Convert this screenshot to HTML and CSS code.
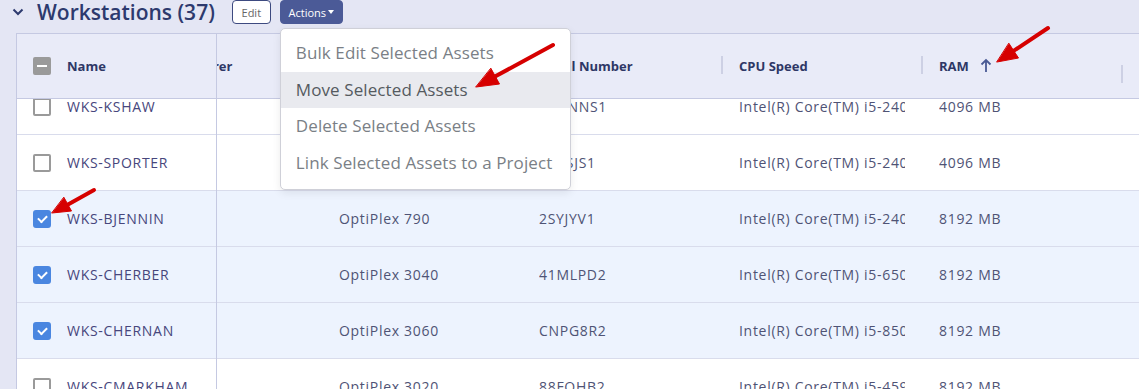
FILE: index.html
```html
<!DOCTYPE html>
<html lang="en">
<head>
  <meta charset="UTF-8">
  <title>Workstations</title>
  <link rel="stylesheet" href="styles.css">
</head>
<body>
  <div class="section-head">
    <svg class="chevron" width="12" height="8" viewBox="0 0 12 8"><path d="M1.5 1.5 L6 6 L10.5 1.5" fill="none" stroke="#2d3a6e" stroke-width="2"/></svg>
    <h2>Workstations (37)</h2>
    <button class="btn btn-outline">Edit</button>
    <div class="actions">
      <button class="btn btn-primary">Actions<span class="caret"></span></button>
      <ul class="menu">
        <li>Bulk Edit Selected Assets</li>
        <li class="hover">Move Selected Assets</li>
        <li>Delete Selected Assets</li>
        <li>Link Selected Assets to a Project</li>
      </ul>
    </div>
  </div>

  <div class="grid">
    <div class="pane-fixed">
      <div class="head-row">
        <span class="cb cb-mixed"></span>
        <span class="head-label">Name</span>
      </div>
      <div class="viewport">
        <div class="rows">
          <div class="row"><span class="cb"></span><span class="name">WKS-KSHAW</span></div>
          <div class="row"><span class="cb"></span><span class="name">WKS-SPORTER</span></div>
          <div class="row selected"><span class="cb cb-on"></span><span class="name">WKS-BJENNIN</span></div>
          <div class="row selected"><span class="cb cb-on"></span><span class="name">WKS-CHERBER</span></div>
          <div class="row selected"><span class="cb cb-on"></span><span class="name">WKS-CHERNAN</span></div>
          <div class="row"><span class="cb"></span><span class="name">WKS-CMARKHAM</span></div>
        </div>
      </div>
    </div>

    <div class="pane-scroll">
      <div class="track">
        <div class="head-row">
          <div class="cell head-label first">Manufacturer</div>
          <div class="cell head-label sep">Model</div>
          <div class="cell head-label sep">Serial Number</div>
          <div class="cell head-label sep">CPU Speed</div>
          <div class="cell head-label sep">RAM <svg class="sort" width="12" height="15" viewBox="0 0 12 15"><path d="M6 14 V2.5 M1.5 6.5 L6 2 L10.5 6.5" fill="none" stroke="#4a5a94" stroke-width="1.8"/></svg></div>
          <div class="cell head-label sep"></div>
        </div>
        <div class="viewport">
          <div class="rows">
            <div class="row"><div class="cell"></div><div class="cell"></div><div class="cell">H8ZNNS1</div><div class="cell">Intel(R) Core(TM) i5-2400 CPU</div><div class="cell">4096 MB</div><div class="cell"></div></div>
            <div class="row"><div class="cell"></div><div class="cell"></div><div class="cell">6VPSJS1</div><div class="cell">Intel(R) Core(TM) i5-2400 CPU</div><div class="cell">4096 MB</div><div class="cell"></div></div>
            <div class="row selected"><div class="cell"></div><div class="cell">OptiPlex 790</div><div class="cell">2SYJYV1</div><div class="cell">Intel(R) Core(TM) i5-2400 CPU</div><div class="cell">8192 MB</div><div class="cell"></div></div>
            <div class="row selected"><div class="cell"></div><div class="cell">OptiPlex 3040</div><div class="cell">41MLPD2</div><div class="cell">Intel(R) Core(TM) i5-6500 CPU</div><div class="cell">8192 MB</div><div class="cell"></div></div>
            <div class="row selected"><div class="cell"></div><div class="cell">OptiPlex 3060</div><div class="cell">CNPG8R2</div><div class="cell">Intel(R) Core(TM) i5-8500 CPU</div><div class="cell">8192 MB</div><div class="cell"></div></div>
            <div class="row"><div class="cell"></div><div class="cell">OptiPlex 3020</div><div class="cell">88FQHB2</div><div class="cell">Intel(R) Core(TM) i5-4590 CPU</div><div class="cell">8192 MB</div><div class="cell"></div></div>
          </div>
        </div>
      </div>
    </div>
  </div>

  <!-- red annotation arrows -->
  <svg class="marks" width="1139" height="389" viewBox="0 0 1139 389">
    <g fill="#d60000" stroke="#d60000" stroke-linecap="round">
      <line x1="553" y1="45" x2="495" y2="76.5" stroke-width="4"/>
      <polygon points="476,87 499.5,84 491,68.5" stroke-width="1"/>
      <line x1="94" y1="190" x2="68" y2="204.4" stroke-width="4"/>
      <polygon points="52,213 71.5,211 64,197.5" stroke-width="1"/>
      <line x1="1048" y1="28" x2="1013.6" y2="50.9" stroke-width="4"/>
      <polygon points="997,62 1018.5,58 1009,43.5" stroke-width="1"/>
    </g>
  </svg>
</body>
</html>
```

FILE: styles.css
```css
body {
  margin: 0;
  height: 389px;
  overflow: hidden;
  background: #e4e6f4;
  font-family: 'Open Sans', 'DejaVu Sans', sans-serif;
  color: #4f5375;
  position: relative;
}

.section-head {
  display: flex;
  align-items: center;
  height: 24px;
  padding-left: 12px;
}

.chevron {
  margin-right: 13px;
}

.section-head h2 {
  margin: 0 17px 0 0;
  font-size: 21px;
  font-weight: 600;
  color: #2d3a6e;
  line-height: 24px;
  white-space: nowrap;
}

.btn {
  display: flex;
  align-items: center;
  justify-content: center;
  box-sizing: border-box;
  font-family: inherit;
  font-size: 11px;
  height: 24px;
  border-radius: 4px;
  padding: 0;
  white-space: nowrap;
  cursor: pointer;
}

.btn-outline {
  background: #fff;
  border: 1px solid #3d4a80;
  color: #666;
  width: 39px;
  margin-right: 9px;
}

.btn-primary {
  background: #4b5a97;
  border: 1px solid #4b5a97;
  color: #fff;
  width: 63px;
}

.caret {
  display: inline-block;
  border-top: 4px solid #fff;
  border-left: 3px solid transparent;
  border-right: 3px solid transparent;
  margin-left: 2px;
}

.actions {
  position: relative;
  height: 24px;
}

.menu {
  position: absolute;
  top: 28px;
  left: 0;
  z-index: 5;
  width: 289px;
  margin: 0;
  padding: 6px 0 8px;
  list-style: none;
  background: #fff;
  border: 1px solid #cfd0d8;
  border-radius: 5px;
  box-shadow: 0 3px 8px rgba(0, 0, 0, 0.08);
}

.menu li {
  height: 36.5px;
  line-height: 36.5px;
  padding-left: 15px;
  font-size: 17px;
  letter-spacing: 0.1px;
  color: #7a7f86;
  white-space: nowrap;
}

.menu li.hover {
  background: #e9eaef;
  color: #555a60;
}

/* grid */
.grid {
  display: flex;
  margin: 9px 0 0 16px;
  border-top: 1px solid #c5c9e2;
  border-left: 1px solid #c5c9e2;
}

.pane-fixed {
  width: 199px;
  flex: none;
  border-right: 1px solid #c5c9e2;
}

.pane-scroll {
  flex: 1;
  overflow: hidden;
}

.track {
  margin-left: -95px;
}

.head-row {
  display: flex;
  align-items: center;
  height: 64px;
  background: #e9ebf8;
  border-bottom: 1px solid #c5c9e2;
}

.pane-fixed .head-row,
.pane-fixed .row {
  padding-left: 16px;
}

.head-label {
  font-size: 13px;
  font-weight: 700;
  color: #2e3766;
}

.pane-fixed .head-label {
  margin-left: 16px;
}

.viewport {
  height: 291px;
  overflow: hidden;
}

.rows {
  margin-top: -20px;
}

.row {
  display: flex;
  align-items: center;
  height: 55px;
  background: #fff;
  border-bottom: 1px solid #d9dcec;
  font-size: 14px;
  letter-spacing: 0.7px;
}

.row.selected {
  background: #edf3fe;
}

.name {
  margin-left: 16px;
  color: #47467c;
}

.cell {
  width: 166px;
  flex: none;
  margin: 0 17px;
  white-space: nowrap;
  overflow: hidden;
  position: relative;
}

.head-row .cell {
  overflow: visible;
}

.head-row .cell.first {
  margin-left: 20px;
  width: 163px;
}

.head-row .cell.sep::before {
  content: '';
  position: absolute;
  left: -18px;
  top: -1px;
  width: 2px;
  height: 18px;
  background: #cdd0e4;
}

.sort {
  margin-left: 8px;
  vertical-align: -2px;
}

/* checkboxes */
.cb {
  width: 18px;
  height: 18px;
  flex: none;
  box-sizing: border-box;
  border: 2px solid #9a9a9a;
  border-radius: 2px;
  background: #fff;
  position: relative;
}

.cb-mixed {
  background: #9a9a9a;
}

.cb-mixed::after {
  content: '';
  position: absolute;
  left: 2px;
  top: 6px;
  width: 10px;
  height: 2px;
  background: #fff;
}

.cb-on {
  background: #4a86e0;
  border-color: #4a86e0;
  border-radius: 3px;
}

.cb-on::after {
  content: '';
  position: absolute;
  left: 3px;
  top: 1px;
  width: 7px;
  height: 4px;
  border-left: 2px solid #fff;
  border-bottom: 2px solid #fff;
  transform: translate(0, 2px) rotate(-45deg);
}

.marks {
  position: absolute;
  top: 0;
  left: 0;
  pointer-events: none;
  z-index: 10;
}
```
